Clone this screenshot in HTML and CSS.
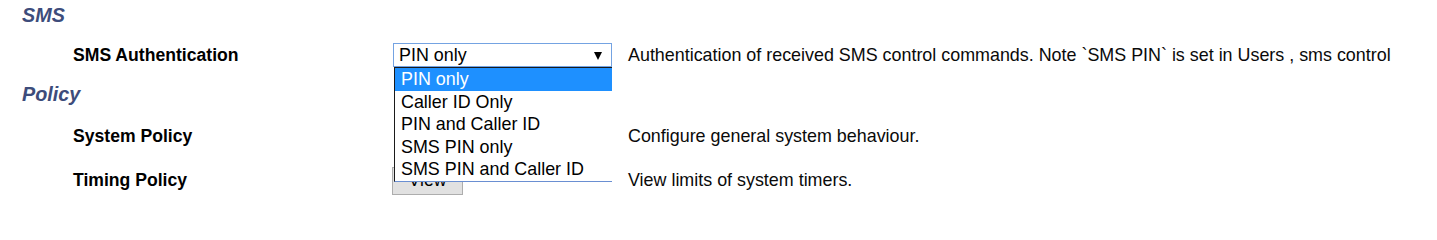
FILE: index.html
```html
<!DOCTYPE html>
<html>
<head>
<meta charset="utf-8">
<title>Settings</title>
<link rel="stylesheet" href="styles.css">
</head>
<body>
<div class="page">
  <h2 class="section-title">SMS</h2>
  <div class="row row--select">
    <div class="label">SMS Authentication</div>
    <div class="control">
      <div class="select">
        <span class="select-value">PIN only</span>
        <span class="select-arrow"></span>
        <ul class="select-list">
          <li class="option option--active">PIN only</li>
          <li class="option">Caller ID Only</li>
          <li class="option">PIN and Caller ID</li>
          <li class="option">SMS PIN only</li>
          <li class="option">SMS PIN and Caller ID</li>
        </ul>
      </div>
    </div>
    <div class="desc">Authentication of received SMS control commands. Note `SMS PIN` is set in Users , sms control</div>
  </div>

  <h2 class="section-title section-title--spaced">Policy</h2>
  <div class="row">
    <div class="label">System Policy</div>
    <div class="control"></div>
    <div class="desc">Configure general system behaviour.</div>
  </div>
  <div class="row">
    <div class="label">Timing Policy</div>
    <div class="control"><button class="btn">View</button></div>
    <div class="desc">View limits of system timers.</div>
  </div>
</div>
</body>
</html>
```

FILE: styles.css
```css
html, body {
  margin: 0;
  padding: 0;
  background: #ffffff;
}

body {
  font-family: "Liberation Sans", Arial, sans-serif;
  font-size: 17.9px;
  color: #0a0a0a;
}

.page {
  padding-left: 22px;
}

.section-title {
  margin: 0;
  height: 31px;
  line-height: 31px;
  font-size: 19.8px;
  font-weight: bold;
  font-style: italic;
  color: #3d4c7b;
}

.section-title--spaced {
  margin-bottom: 4px;
}

.row {
  display: grid;
  grid-template-columns: 320px 235px 1fr;
  align-items: center;
  height: 44px;
  padding-left: 51px;
}

.row--select {
  height: 48px;
}

.label {
  font-weight: bold;
  font-size: 17.6px;
  color: #000000;
  white-space: nowrap;
}

.desc {
  white-space: nowrap;
  color: #0a0a0a;
}

.control {
  display: flex;
  align-items: center;
}

.select {
  position: relative;
  box-sizing: border-box;
  width: 219px;
  height: 24px;
  border: 1px solid #74a3e2;
  background: #ffffff;
  display: flex;
  align-items: center;
  justify-content: space-between;
  padding: 0 9px 0 5px;
}

.select-value {
  color: #000000;
  line-height: 22px;
}

.select-arrow {
  width: 0;
  height: 0;
  border-left: 4px solid transparent;
  border-right: 4px solid transparent;
  border-top: 8px solid #000000;
  margin-top: 2px;
}

.select-list {
  position: absolute;
  top: 23px;
  left: 0;
  width: 218px;
  box-sizing: border-box;
  margin: 0;
  padding: 0;
  list-style: none;
  background: #ffffff;
  border-top: 1px solid #1a1a1a;
  border-left: 1px solid #1a1a1a;
  border-bottom: 1px solid #6a8fd2;
  z-index: 10;
}

.option {
  height: 22.6px;
  line-height: 22.6px;
  padding-left: 6px;
  color: #000000;
  white-space: nowrap;
}

.option--active {
  background: #1e90ff;
  color: #ffffff;
}

.btn {
  box-sizing: border-box;
  width: 71px;
  height: 28px;
  margin-left: -1px;
  margin-top: 1px;
  font-family: "Liberation Sans", Arial, sans-serif;
  font-size: 17.6px;
  color: #000000;
  background: #e1e1e1;
  border: 1px solid #adadad;
  padding: 0;
}
```
